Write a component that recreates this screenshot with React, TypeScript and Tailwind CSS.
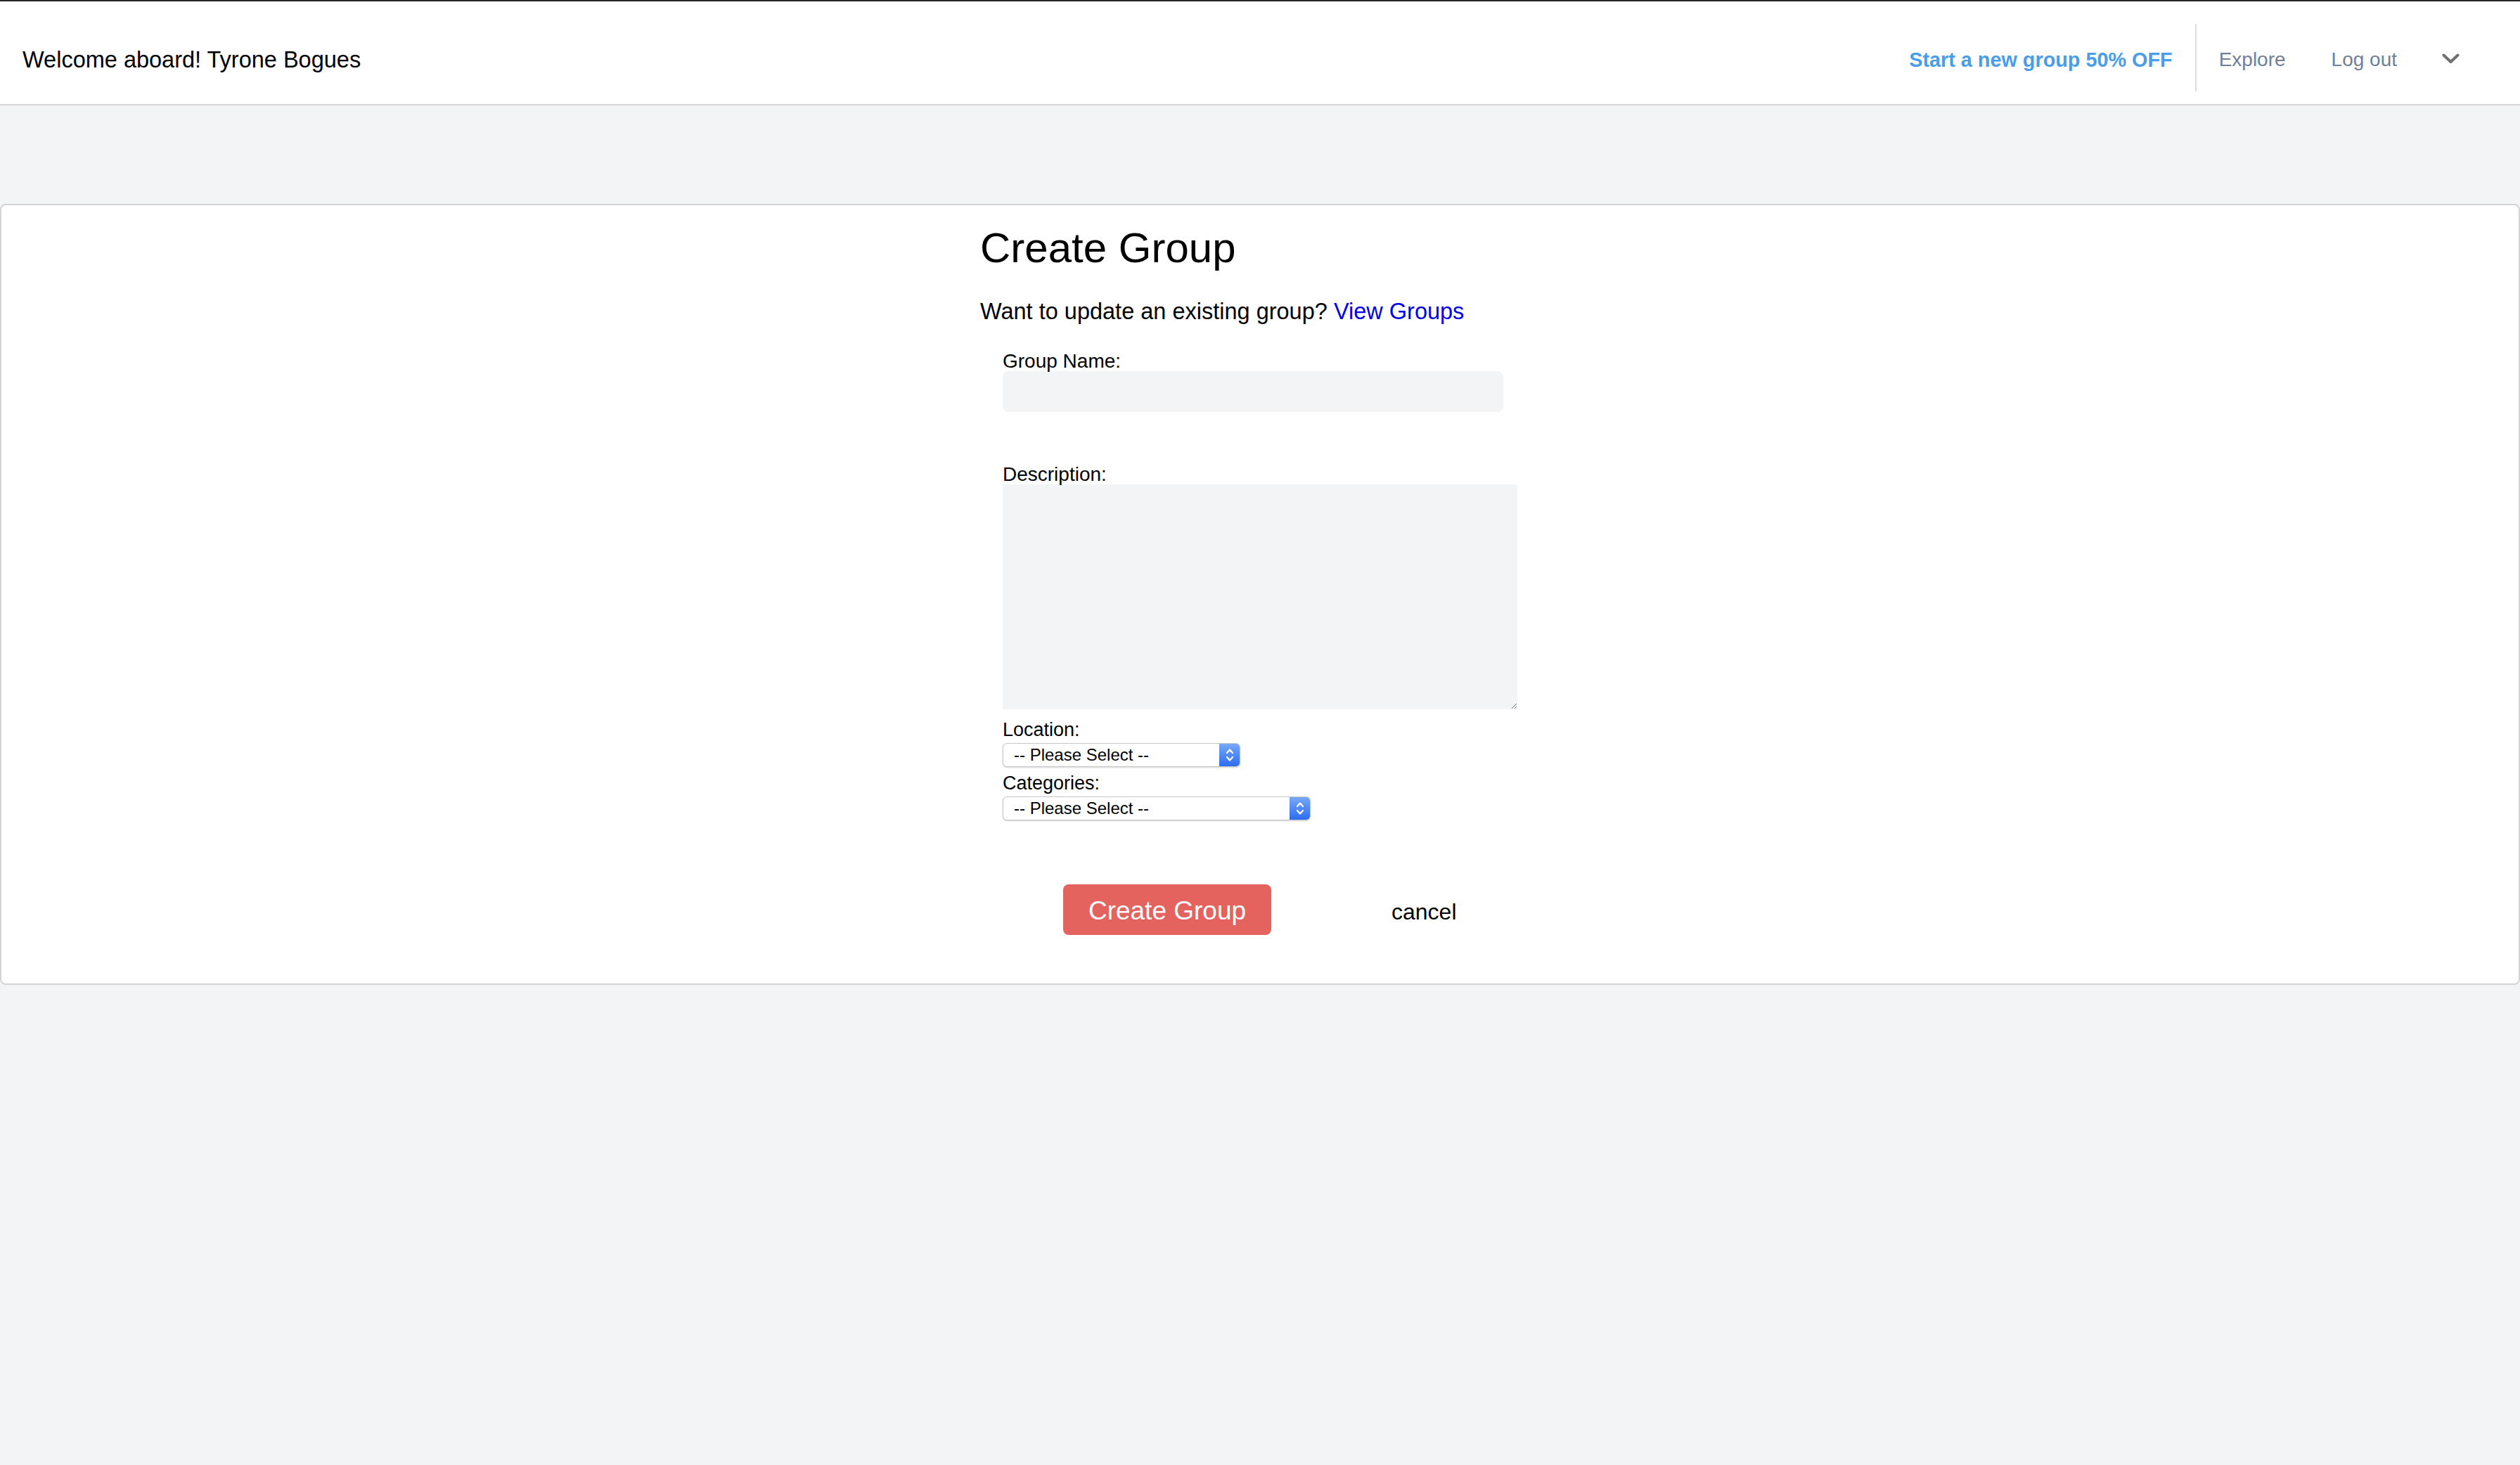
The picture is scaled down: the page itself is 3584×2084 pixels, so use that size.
import React from 'react';

function SelectBox({ width }: { width: string }) {
  return (
    <div
      className={`${width} mt-[3px] h-[34px] flex items-stretch rounded-[6px] border border-[#c6c6c6] bg-white shadow-[0_1px_2px_rgba(0,0,0,0.18)] overflow-hidden`}
    >
      <div className="flex-1 flex items-center pl-[15px] text-[24px] text-black font-['Liberation_Sans',sans-serif]">
        -- Please Select --
      </div>
      <div className="w-[29px] flex items-center justify-center bg-gradient-to-b from-[#78a7f6] to-[#2c6cf0]">
        <svg width="14" height="22" viewBox="0 0 14 22" fill="none">
          <polyline points="3,8 7,3.5 11,8" stroke="white" strokeWidth="2.2" strokeLinecap="round" strokeLinejoin="round" />
          <polyline points="3,14 7,18.5 11,14" stroke="white" strokeWidth="2.2" strokeLinecap="round" strokeLinejoin="round" />
        </svg>
      </div>
    </div>
  );
}

export default function App() {
  return (
    <div className="min-h-screen bg-[#f3f4f6] font-['Liberation_Sans',Arial,sans-serif] text-black">
      {/* top navigation */}
      <header className="h-[150px] bg-white border-t-2 border-t-[#262626] border-b-2 border-b-[#d4d4d6] pt-[20px] flex items-center">
        <div className="pl-[32px] text-[32.5px] leading-[48px]">Welcome aboard! Tyrone Bogues</div>
        <nav className="ml-auto flex items-center pr-[86px]">
          <a className="text-[28.8px] font-bold text-[#4a9de9] leading-[40px]">Start a new group 50% OFF</a>
          <div className="mx-[32px] w-[2px] h-[96px] bg-[#dcdcdc] mb-[6px]" />
          <a className="text-[28px] text-[#718096] leading-[40px]">Explore</a>
          <a className="ml-[65px] text-[28px] text-[#718096] leading-[40px]">Log out</a>
          <svg className="ml-[64px] mb-[4px]" width="25" height="15" viewBox="0 0 25 15" fill="none">
            <polyline points="2.5,2.5 12.5,12 22.5,2.5" stroke="#707070" strokeWidth="4" strokeLinecap="round" strokeLinejoin="round" />
          </svg>
        </nav>
      </header>

      {/* form card */}
      <main className="mt-[140px] bg-white border-2 border-[#d4d4d6] rounded-[8px] pt-[25px] pb-[69px]">
        <div className="mx-auto w-[796px]">
          <h1 className="text-[60px] leading-[72px] font-normal">Create Group</h1>
          <p className="mt-[30px] text-[32.5px] leading-[48px]">
            Want to update an existing group? <a className="text-[#0000ee]">View Groups</a>
          </p>

          <form className="pl-[32px] mt-[25px]">
            <label className="block h-[36px] text-[28px] leading-[44px]">Group Name:</label>
            <input type="text" className="block w-[712px] h-[58px] bg-[#f3f4f6] rounded-[8px] outline-none" />

            <label className="block mt-[67px] h-[36px] text-[28px] leading-[44px]">Description:</label>
            <textarea className="block w-[732px] h-[320px] bg-[#f3f4f6] outline-none" />

            <label className="block mt-[9px] h-[36px] text-[27px] leading-[40px]">Location:</label>
            <SelectBox width="w-[338px]" />

            <label className="block mt-[3px] h-[36px] text-[27px] leading-[40px]">Categories:</label>
            <SelectBox width="w-[438px]" />

            <div className="mt-[91px] flex items-center">
              <button
                type="button"
                className="ml-[86px] w-[296px] h-[72px] rounded-[8px] bg-[#e4635f] text-white text-[37px] leading-[76px]"
              >
                Create Group
              </button>
              <a className="ml-[171px] pt-[6px] text-[32px] leading-[48px]">cancel</a>
            </div>
          </form>
        </div>
      </main>
    </div>
  );
}
